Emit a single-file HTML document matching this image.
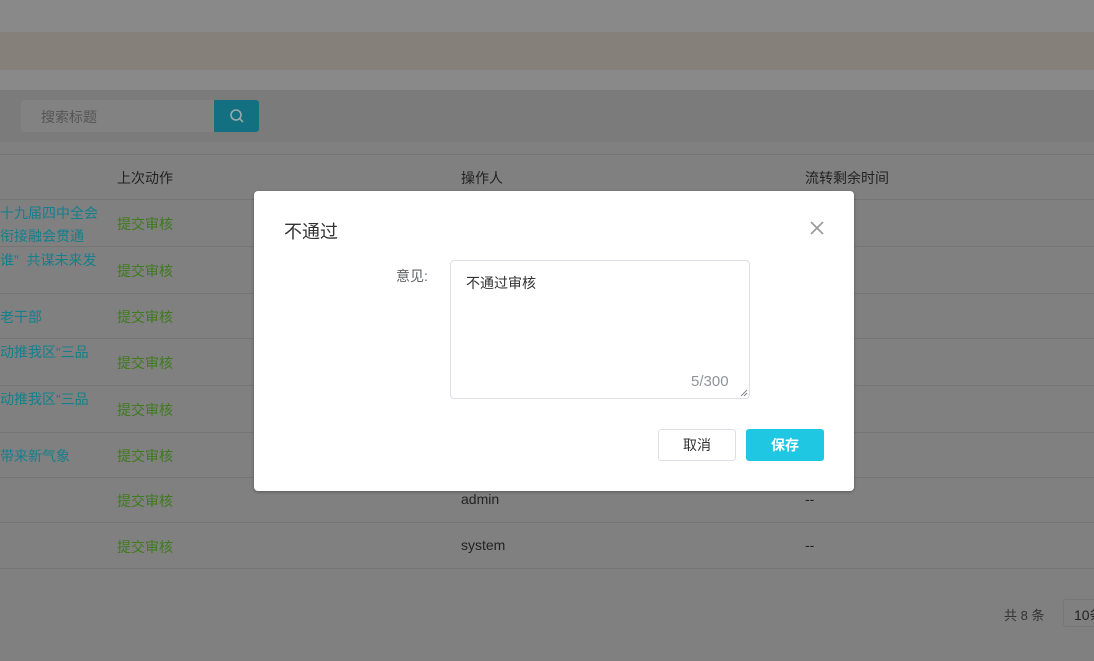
<!DOCTYPE html>
<html><head><meta charset="utf-8"><style>
*{margin:0;padding:0;box-sizing:border-box}
body{width:1094px;height:661px;overflow:hidden;background:#808080;position:relative;font-family:"Liberation Sans","Noto Sans CJK SC",sans-serif;font-size:14px}
.a{position:absolute;white-space:nowrap}
.ln{position:absolute;left:0;width:1094px;height:1px;background:#757575}
.l{color:#137f8c}.g{color:#3f7a1e}.d{color:#222}
</style></head><body>
<div class="a" style="left:0;top:0;width:1094px;height:32px;background:#898989"></div>
<div class="a" style="left:0;top:32px;width:1094px;height:38px;background:#86807a"></div>
<div class="a" style="left:0;top:70px;width:1094px;height:20px;background:#898989"></div>
<div class="a" style="left:0;top:90px;width:1094px;height:52px;background:#7b7b7b"></div>
<div class="a" style="left:21px;top:100px;width:194px;height:32px;background:#828282;border-radius:3px 0 0 3px"></div>
<div class="a" style="left:41px;top:107px;color:#555">搜索标题</div>
<div class="a" style="left:214px;top:100px;width:45px;height:32px;background:#127080;border-radius:0 3px 3px 0"></div>
<svg class="a" style="left:229px;top:108px" width="16" height="16" viewBox="0 0 16 16"><circle cx="7" cy="7" r="5" fill="none" stroke="#9aa" stroke-width="1.6"/><path d="M10.5 10.5L14 14" stroke="#9aa" stroke-width="1.6"/></svg>
<div class="ln" style="top:154px"></div>
<div class="a d" style="left:117px;top:168px">上次动作</div>
<div class="a d" style="left:461px;top:168px">操作人</div>
<div class="a d" style="left:805px;top:168px">流转剩余时间</div>
<div class="ln" style="top:199px"></div>
<div class="a l" style="left:0;top:203px">十九届四中全会</div>
<div class="a l" style="left:0;top:226px">衔接融会贯通</div>
<div class="a g" style="left:117px;top:214px">提交审核</div>
<div class="ln" style="top:246px"></div>
<div class="a l" style="left:0;top:250px">谁” &nbsp;共谋未来发</div>
<div class="a g" style="left:117px;top:261px">提交审核</div>
<div class="ln" style="top:293px"></div>
<div class="a l" style="left:0;top:307px">老干部</div>
<div class="a g" style="left:117px;top:307px">提交审核</div>
<div class="ln" style="top:338px"></div>
<div class="a l" style="left:0;top:342px">动推我区“三品</div>
<div class="a g" style="left:117px;top:353px">提交审核</div>
<div class="ln" style="top:385px"></div>
<div class="a l" style="left:0;top:389px">动推我区“三品</div>
<div class="a g" style="left:117px;top:400px">提交审核</div>
<div class="ln" style="top:432px"></div>
<div class="a l" style="left:0;top:446px">带来新气象</div>
<div class="a g" style="left:117px;top:446px">提交审核</div>
<div class="ln" style="top:477px"></div>
<div class="a g" style="left:117px;top:491px">提交审核</div>
<div class="a d" style="left:461px;top:491px">admin</div>
<div class="a d" style="left:805px;top:491px">--</div>
<div class="ln" style="top:522px"></div>
<div class="a g" style="left:117px;top:537px">提交审核</div>
<div class="a d" style="left:461px;top:537px">system</div>
<div class="a d" style="left:805px;top:537px">--</div>
<div class="ln" style="top:568px"></div>
<div class="a" style="left:1004px;top:605px;font-size:13px;color:#333">共 8 条</div>
<div class="a" style="left:1063px;top:599px;width:40px;height:28px;border:1px solid #777;border-radius:3px;color:#222;padding:5px 10px">10条</div>

<div class="a" style="left:254px;top:191px;width:600px;height:300px;background:#fff;border-radius:4px;box-shadow:0 1px 3px rgba(0,0,0,.3)">
<div class="a" style="left:30px;top:27px;font-size:18px;color:#333">不通过</div>
<svg class="a" style="left:556px;top:30px" width="14" height="14" viewBox="0 0 14 14"><path d="M1 1L13 13M13 1L1 13" stroke="#999" stroke-width="1.6"/></svg>
<div class="a" style="left:142px;top:75px;color:#606266">意见:</div>
<div class="a" style="left:196px;top:69px;width:300px;height:139px;border:1px solid #dcdfe6;border-radius:4px"></div>
<div class="a" style="left:212px;top:82px;color:#333">不通过审核</div>
<div class="a" style="left:437px;top:182px;color:#909399;font-size:15px">5/300</div>
<svg class="a" style="left:486px;top:198px" width="8" height="8"><path d="M1 7L7 1M4 7L7 4" stroke="#888"/></svg>
<div class="a" style="left:404px;top:238px;width:78px;height:32px;border:1px solid #dcdfe6;border-radius:3px;text-align:center;line-height:30px;color:#333">取消</div>
<div class="a" style="left:492px;top:238px;width:78px;height:32px;background:#1fc7e2;border-radius:3px;text-align:center;line-height:32px;color:#fff;font-weight:bold">保存</div>
</div>
</body></html>
